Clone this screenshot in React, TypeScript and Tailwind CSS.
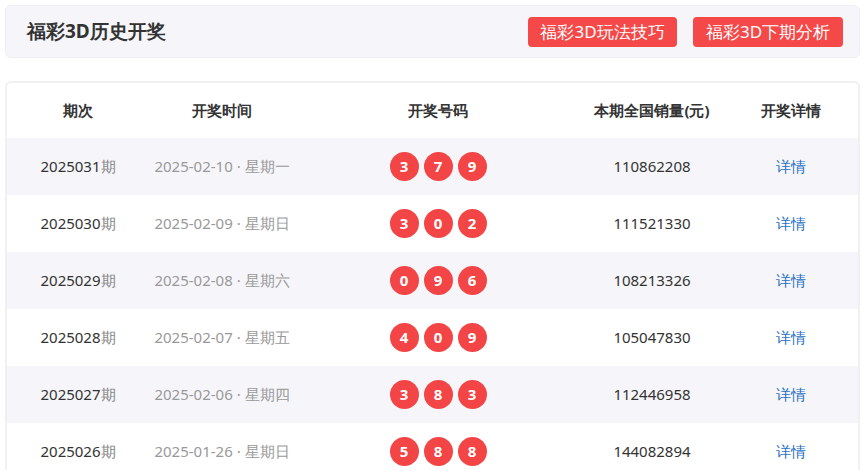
const rows = [
  ["2025031", "2025-02-10", "星期一", [3, 7, 9], "110862208"],
  ["2025030", "2025-02-09", "星期日", [3, 0, 2], "111521330"],
  ["2025029", "2025-02-08", "星期六", [0, 9, 6], "108213326"],
  ["2025028", "2025-02-07", "星期五", [4, 0, 9], "105047830"],
  ["2025027", "2025-02-06", "星期四", [3, 8, 3], "112446958"],
  ["2025026", "2025-01-26", "星期日", [5, 8, 8], "144082894"],
] as const;

const cols = "grid grid-cols-[142px_146px_286px_142px_1fr] items-center text-center";

export default function App() {
  return (
    <div className="h-[470px] overflow-hidden bg-white p-[5px] text-[15px] text-[#333] [font-family:Arial,'Liberation_Sans','Noto_Sans_CJK_SC',sans-serif]">
      <header className="flex h-[53px] items-center justify-between rounded-md border border-[#eeeef2] bg-[#f6f6fa] pl-[21px] pr-[16px]">
        <h1 className="text-[19px] font-bold text-[#333]">福彩3D历史开奖</h1>
        <div className="flex gap-[16px]">
          <button className="h-[30px] w-[149px] rounded-[4px] bg-[#f54848] text-[17px] text-white">福彩3D玩法技巧</button>
          <button className="h-[30px] w-[150px] rounded-[4px] bg-[#f54848] text-[17px] text-white">福彩3D下期分析</button>
        </div>
      </header>
      <section className="mt-[23px] overflow-hidden rounded-md border-2 border-[#f0f0f3] bg-white">
        <div className={`${cols} h-[55px] font-bold text-[#333]`}>
          <div>期次</div>
          <div>开奖时间</div>
          <div>开奖号码</div>
          <div>本期全国销量(元)</div>
          <div>开奖详情</div>
        </div>
        {rows.map(([no, date, week, balls, sales], i) => (
          <div key={no} className={`${cols} h-[57px] ${i % 2 === 0 ? "bg-[#f6f6fa]" : "bg-white"}`}>
            <div>
              {no}
              <span className="text-[#888]">期</span>
            </div>
            <div className="text-[#999]">
              {date} · {week}
            </div>
            <div className="flex justify-center gap-[5px]">
              {balls.map((b, j) => (
                <span key={j} className="flex h-[29px] w-[29px] items-center justify-center rounded-full bg-[#f34545] text-[15px] font-bold text-white">
                  {b}
                </span>
              ))}
            </div>
            <div>{sales}</div>
            <div className="text-[#1f6fc5]">详情</div>
          </div>
        ))}
      </section>
    </div>
  );
}
